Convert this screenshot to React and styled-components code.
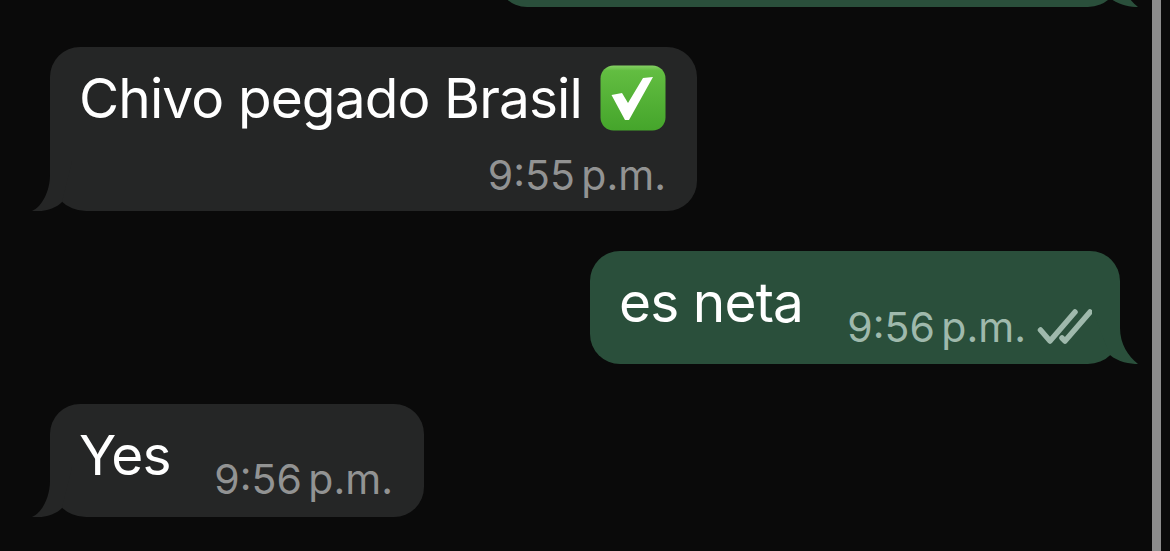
import React from "react";
import styled, { createGlobalStyle } from "styled-components";

const Global = createGlobalStyle`
  html, body { margin: 0; padding: 0; background: #0a0a0a; }
  body { width: 1170px; height: 551px; overflow: hidden; }
`;

const Page = styled.div`
  width: 1170px;
  height: 551px;
  box-sizing: border-box;
  background: #0a0a0a;
  display: flex;
  overflow: hidden;
  font-family: Inter, "Liberation Sans", sans-serif;
`;

const Thread = styled.div`
  width: 1152px;
  flex: none;
  display: flex;
  flex-direction: column;
  padding-left: 50px;
  padding-right: 32px;
  box-sizing: border-box;
`;

const Scrollbar = styled.div`
  width: 9px;
  flex: none;
  height: 100%;
  background: #8c8c8c;
`;

const Row = styled.div`
  display: flex;
  flex: none;
  justify-content: ${(p) => (p.$out ? "flex-end" : "flex-start")};
  margin-top: ${(p) => p.$gap}px;
`;

const Bubble = styled.div`
  position: relative;
  flex: none;
  box-sizing: border-box;
  background: ${(p) => (p.$out ? "#2a4f3b" : "#252626")};
  border-radius: ${(p) => (p.$out ? "30px 30px 32px 30px" : "30px 30px 30px 36px")};
  width: ${(p) => p.$w}px;
  height: ${(p) => p.$h}px;
  padding: 15px ${(p) => p.$right ?? 31}px 0 29px;
  display: flex;
  flex-direction: ${(p) => (p.$stack ? "column" : "row")};
  justify-content: ${(p) => (p.$stack ? "flex-start" : "space-between")};
`;

const Tail = styled.svg`
  position: absolute;
  bottom: 0;
  ${(p) => (p.$out ? "right: -26px;" : "left: -18px;")}
`;

const Message = styled.span`
  font-size: 55px;
  line-height: 72px;
  color: #ffffff;
  letter-spacing: -0.9px;
  white-space: nowrap;
  display: flex;
  align-items: center;
  height: 72px;
`;

const Meta = styled.div`
  display: flex;
  align-items: center;
  justify-content: flex-end;
  gap: 11px;
  margin-top: ${(p) => p.$top}px;
  height: 44px;
`;

const Time = styled.span`
  font-size: 41px;
  line-height: 44px;
  letter-spacing: 0;
  word-spacing: -5px;
  color: ${(p) => (p.$out ? "#9fb9ac" : "#929393")};
  white-space: nowrap;
`;

const Emoji = styled.svg`
  margin: -1px 0 0 18px;
  flex: none;
`;

const Check = () => (
  <Emoji width="66" height="66" viewBox="0 0 66 66">
    <defs>
      <linearGradient id="emoji-fill" x1="0" y1="0" x2="0" y2="1">
        <stop offset="0" stopColor="#86d164" />
        <stop offset="0.08" stopColor="#62bd41" />
        <stop offset="1" stopColor="#45a52b" />
      </linearGradient>
    </defs>
    <rect x="0.5" y="0.5" width="65" height="65" rx="13" fill="url(#emoji-fill)" />
    <path d="M11.5 30 L22 28 L28 38 L43 13 L53 12 L29 55 L25 55 Z" fill="#fff" />
  </Emoji>
);

const InTail = () => (
  <Tail width="50" height="50" viewBox="0 0 50 50">
    <path d="M18 0 L18 14 C18 30 10 46 0 50 C10 51 22 49 30 41 L40 0 Z" fill="#252626" />
  </Tail>
);

const OutTail = () => (
  <Tail $out width="56" height="60" viewBox="0 0 56 60">
    <path d="M30 0 L30 24 C30 40 38 52 48 60 C40 60 28 58 20 51 L0 0 Z" fill="#2a4f3b" />
  </Tail>
);

const DoubleTick = () => (
  <svg width="55" height="38" viewBox="0 0 55 38" fill="none" stroke="#9fb9ac" strokeWidth="5.5" strokeLinecap="round" strokeLinejoin="round">
    <path d="M3.5 22 L13 33 L38 4" />
    <path d="M25 30 L28 33 L53 4" />
  </svg>
);

export default function App() {
  return (
    <Page>
      <Global />
      <Thread>
        <Row $out $gap={-93}>
          <Bubble $out $w={623} $h={100}>
            <OutTail />
          </Bubble>
        </Row>
        <Row $gap={40}>
          <Bubble $w={647} $h={164} $stack>
            <Message>
              Chivo pegado Brasil
              <Check />
            </Message>
            <Meta $top={19}>
              <Time>9:55 p.m.</Time>
            </Meta>
            <InTail />
          </Bubble>
        </Row>
        <Row $out $gap={40}>
          <Bubble $out $w={530} $h={113} $right={28}>
            <Message>es neta</Message>
            <Meta $top={39}>
              <Time $out>9:56 p.m.</Time>
              <DoubleTick />
            </Meta>
            <OutTail />
          </Bubble>
        </Row>
        <Row $gap={40}>
          <Bubble $w={374} $h={113}>
            <Message>Yes</Message>
            <Meta $top={38}>
              <Time>9:56 p.m.</Time>
            </Meta>
            <InTail />
          </Bubble>
        </Row>
      </Thread>
      <Scrollbar />
    </Page>
  );
}
